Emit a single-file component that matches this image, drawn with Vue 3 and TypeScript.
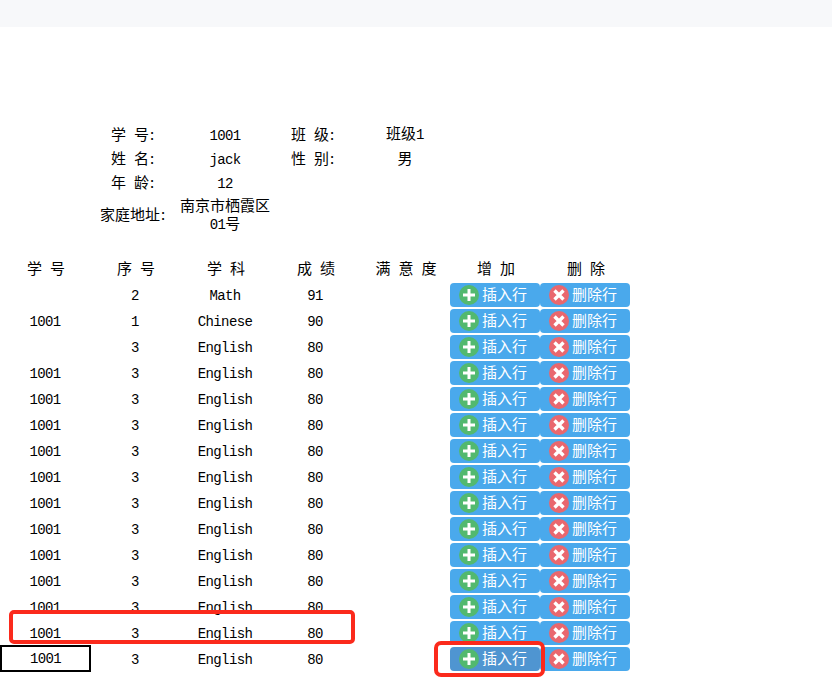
<script setup lang="ts">
interface Row { id: string; no: string; subject: string; score: string }
const rows: Row[] = [
  { id: '', no: '2', subject: 'Math', score: '91' },
  { id: '1001', no: '1', subject: 'Chinese', score: '90' },
  { id: '', no: '3', subject: 'English', score: '80' },
  ...Array.from({ length: 12 }, () => ({ id: '1001', no: '3', subject: 'English', score: '80' })),
]
const headers = ['学 号', '序 号', '学 科', '成 绩', '满 意 度', '增 加', '删 除']
</script>

<template>
  <div class="page">
    <div class="topbar"></div>
    <div class="info">
      <div class="cell cjk">学 号<span class="colon">:</span></div>
      <div class="cell latin">1001</div>
      <div class="cell cjk">班 级<span class="colon">:</span></div>
      <div class="cell cjk"><span>班级<span class="latin">1</span></span></div>
      <div class="cell cjk">姓 名<span class="colon">:</span></div>
      <div class="cell latin">jack</div>
      <div class="cell cjk">性 别<span class="colon">:</span></div>
      <div class="cell cjk">男</div>
      <div class="cell cjk">年 龄<span class="colon">:</span></div>
      <div class="cell latin">12</div>
      <div class="cell"></div>
      <div class="cell"></div>
      <div class="cell cjk address">家庭地址<span class="colon">:</span></div>
      <div class="cell cjk address stacked">
        <div>南京市栖霞区</div>
        <div><span class="latin">01</span>号</div>
      </div>
    </div>
    <div class="table">
      <div class="row head">
        <div v-for="h in headers" :key="h" class="cell cjk">{{ h }}</div>
      </div>
      <div v-for="(r, i) in rows" :key="i" class="row">
        <div class="cell latin" :class="{ selected: i === rows.length - 1 }">{{ r.id }}</div>
        <div class="cell latin">{{ r.no }}</div>
        <div class="cell latin">{{ r.subject }}</div>
        <div class="cell latin">{{ r.score }}</div>
        <div class="cell"></div>
        <div class="cell">
          <button class="btn" :class="{ active: i === rows.length - 1 }" type="button">
            <svg class="icon" viewBox="0 0 20 20" width="20" height="20">
              <circle cx="10" cy="10" r="10" fill="#52b96f" />
              <path d="M10 4v12M4 10h12" stroke="#fff" stroke-width="3" fill="none" />
            </svg>
            <span class="label">插入行</span>
          </button>
        </div>
        <div class="cell">
          <button class="btn" type="button">
            <svg class="icon" viewBox="0 0 20 20" width="20" height="20">
              <circle cx="10" cy="10" r="10" fill="#e9676e" />
              <path d="M5.5 5.5l9 9M14.5 5.5l-9 9" stroke="#fff" stroke-width="3.4" fill="none" />
            </svg>
            <span class="label">删除行</span>
          </button>
        </div>
      </div>
    </div>
    <div class="mark mark-row"></div>
    <div class="mark mark-btn"></div>
  </div>
</template>

<style scoped>
.page {
  position: relative;
  width: 832px;
  height: 700px;
  overflow: hidden;
  background: #fff;
  color: #000;
  font-family: "Noto Sans CJK SC", sans-serif;
}
.topbar {
  height: 27px;
  background: #f7f8fa;
}
.info {
  display: grid;
  grid-template-columns: repeat(4, 90px);
  grid-auto-rows: 24px;
  margin: 96px 0 0 90px;
}
.cell {
  display: flex;
  align-items: center;
  justify-content: center;
  text-align: center;
  box-sizing: border-box;
  line-height: 18px;
}
.cjk {
  font-family: "Noto Sans CJK SC", sans-serif;
  font-size: 15px;
  word-spacing: 4.7px;
  padding-bottom: 2px;
}
.colon {
  margin-left: 1px;
  margin-right: 5px;
}
.latin {
  font-family: "Liberation Mono", monospace;
  font-size: 14px;
  letter-spacing: -0.6px;
}
.cell.latin {
  padding-top: 1px;
}
.address {
  height: 38px;
  padding-bottom: 0;
}
.stacked {
  display: block;
  padding-top: 1px;
}
.table {
  margin-top: 37px;
}
.row {
  display: grid;
  grid-template-columns: repeat(7, 90px);
  height: 26px;
}
.head .cell {
  padding-left: 2px;
}
.cell.selected {
  border: 2px solid #000;
  margin: -1px -1px 0 0;
  padding-top: 0;
}
.btn {
  display: flex;
  align-items: center;
  gap: 3px;
  width: 90px;
  height: 24px;
  margin: 0;
  padding: 0 0 0 9px;
  border: 0;
  border-radius: 4px;
  background: #4aa9ec;
  color: #fff;
  font-family: "Noto Sans CJK SC", sans-serif;
  font-size: 15px;
  line-height: 22px;
  box-sizing: border-box;
}
.label {
  padding-bottom: 2px;
}
.btn.active {
  background: #4f95d1;
}
.icon {
  flex: none;
}
.mark {
  position: absolute;
  box-sizing: border-box;
  border: 4px solid #fb2a1c;
}
.mark-row {
  left: 9px;
  top: 610px;
  width: 346px;
  height: 34px;
  border-radius: 5px;
}
.mark-btn {
  left: 434px;
  top: 641px;
  width: 111px;
  height: 36px;
  border-radius: 7px;
}
</style>
